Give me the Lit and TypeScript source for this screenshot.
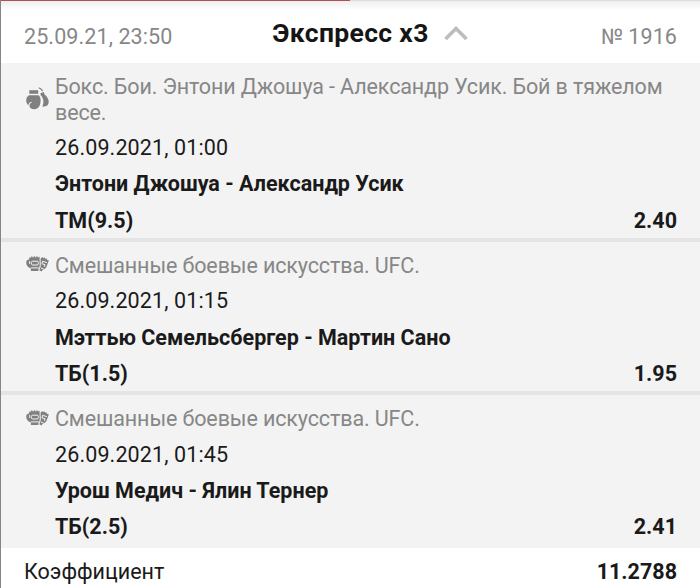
import { LitElement, html, css, svg } from 'lit';
import { customElement, property } from 'lit/decorators.js';

type Sport = 'boxing' | 'mma';

interface BetEvent {
  sport: Sport;
  league: string;
  date: string;
  teams: string;
  outcome: string;
  odds: string;
}

const EVENTS: BetEvent[] = [
  {
    sport: 'boxing',
    league: 'Бокс. Бои. Энтони Джошуа - Александр Усик. Бой в тяжелом весе.',
    date: '26.09.2021, 01:00',
    teams: 'Энтони Джошуа - Александр Усик',
    outcome: 'ТМ(9.5)',
    odds: '2.40',
  },
  {
    sport: 'mma',
    league: 'Смешанные боевые искусства. UFC.',
    date: '26.09.2021, 01:15',
    teams: 'Мэттью Семельсбергер - Мартин Сано',
    outcome: 'ТБ(1.5)',
    odds: '1.95',
  },
  {
    sport: 'mma',
    league: 'Смешанные боевые искусства. UFC.',
    date: '26.09.2021, 01:45',
    teams: 'Урош Медич - Ялин Тернер',
    outcome: 'ТБ(2.5)',
    odds: '2.41',
  },
];

const ICONS = {
  // pair of boxing gloves with a lace on top
  boxing: svg`
    <path d="M3.300 3.200h8.900v3.600H3.300z"></path>
    <path d="M3 8.300h9.500c1.300 1 2.100 2.600 2.100 4.900 0 5.300-2.200 9-6.300 9-3 0-4.800-1.400-4.800-3.300 0-1.700.9-2.600 2.400-3.300l-.5-.8c-1.700.7-2.800 1.800-3 3.400C1 17.400.2 15.900.2 13.600.2 11.100 1.300 9.300 3 8.300z"></path>
    <path d="M14.300 6.200l3.500-1.100.7 2.400c2.700 2 4.200 4.700 4.200 7.300 0 3.300-2.200 5-6.400 4.900 2-4.500 1.200-8.900-1.400-11.300z"></path>
    <path class="lace" d="M12.800 1.300c2-1 2.200 1.600 3.900 2.600"></path>
  `,
  // two open-finger grappling gloves
  mma: svg`
    <path d="M3.200 3.600V1.400h2.100V.3h1v1h1.500V.3h1.100v1h1.500V.3h1.100v1h1.300V.8h.8v5.400c.5 2.600.1 5.200-1.200 7.100v1.800H4.900v-2.600C1.800 11.600.2 9.100.2 6.800.2 4.700 1.300 3.700 3.200 3.600z"></path>
    <path d="M14.600 2.400l1.800-1.500.7 1.100 1.700-.5.5 1.200 1.500-.1.400 1.300 1.700.4-1.800 5c-.8 2.800-2.700 4.400-4.800 4.900l-.7 1.400-2.300-1.400c1.400-2.600 1.800-5.400 1.300-8.200z"></path>
    <path class="seam" d="M3.700 5v3M4.800 11.900h8"></path>
    <rect class="seam" x="5.500" y="5.200" width="6.800" height="3.800" rx="1.200"></rect>
    <path class="seam" d="M20.800 6.600l-4.300-1.300-.5 2.500 3 .9-.5 2.200M15 12l3 1.300"></path>
  `,
};

@customElement('bet-event')
export class BetEventRow extends LitElement {
  @property({ attribute: false }) event!: BetEvent;

  static styles = css`
    :host {
      display: block;
      padding: 11px 23px 0 25px;
      background: #f3f3f3;
    }

    .league {
      display: flex;
      align-items: center;
      color: #878787;
      line-height: 25.500px;
      letter-spacing: -0.120px;
    }

    .icon {
      flex: none;
      width: 23px;
      margin-right: 6px;
      fill: #808080;
    }

    .boxing {
      height: 23px;
      margin-bottom: 3px;
    }

    .mma {
      height: 16px;
      margin-bottom: 3px;
    }

    .lace {
      fill: none;
      stroke: #808080;
      stroke-width: 1.2;
    }

    .seam {
      fill: none;
      stroke: #f3f3f3;
      stroke-width: 1;
    }

    .line {
      display: flex;
      justify-content: space-between;
      margin-left: 29px;
      line-height: 36.300px;
    }

    .date {
      margin-top: 5px;
      letter-spacing: 0.120px;
    }

    .strong {
      font-weight: 700;
    }

    .pick {
      margin-bottom: -1px;
    }
  `;

  render() {
    const { sport, league, date, teams, outcome, odds } = this.event;
    return html`
      <div class="league">
        <svg class="icon ${sport}" viewBox=${sport === 'boxing' ? '0 0 23 23' : '0 0 23 16'}>
          ${ICONS[sport]}
        </svg>
        <span>${league}</span>
      </div>
      <div class="line date">${date}</div>
      <div class="line strong">${teams}</div>
      <div class="line strong pick">
        <span>${outcome}</span>
        <span>${odds}</span>
      </div>
    `;
  }
}

@customElement('app-root')
export class AppRoot extends LitElement {
  static styles = css`
    :host {
      display: block;
      box-sizing: border-box;
      height: 588px;
      overflow: hidden;
      border-left: 1px solid #858585;
      background: #fff;
      color: #1a1a1a;
      font: 400 21.500px Roboto, sans-serif;
      letter-spacing: 0.010px;
    }

    .progress {
      height: 1px;
      background: linear-gradient(90deg, #b34f54 349px, #dcdedd 349px);
    }

    .header {
      display: grid;
      grid-template-columns: 1fr auto 1fr;
      align-items: center;
      box-sizing: border-box;
      height: 62px;
      padding: 9px 23px 0;
      background: linear-gradient(#eee, #fff 9px);
      color: #878787;
      letter-spacing: 0.100px;
    }

    /* left padding balances the chevron, so the text itself is centred */
    .title {
      display: flex;
      align-items: center;
      gap: 15px;
      padding: 0 0 8px 39px;
      color: #151515;
      font-size: 26.500px;
      font-weight: 700;
      letter-spacing: 0.320px;
    }

    .chevron {
      width: 24px;
      height: 16px;
      fill: none;
      stroke: #bdbdbd;
      stroke-width: 3.6;
    }

    .number {
      text-align: right;
    }

    .events {
      display: grid;
      gap: 4px;
      padding-bottom: 3px;
      background: linear-gradient(#e4e4e4 90%, #f3f3f3 90%);
    }

    .total {
      display: flex;
      justify-content: space-between;
      padding: 0 23px;
      line-height: 47px;
    }

    .sum {
      font-weight: 700;
    }
  `;

  render() {
    return html`
      <div class="progress"></div>
      <div class="header">
        <span>25.09.21, 23:50</span>
        <span class="title">
          Экспресс x3
          <svg class="chevron" viewBox="0 0 24 16">
            <path d="M1.500 14L12 3.500 22.500 14"></path>
          </svg>
        </span>
        <span class="number">№ 1916</span>
      </div>
      <div class="events">
        ${EVENTS.map((event) => html`<bet-event .event=${event}></bet-event>`)}
      </div>
      <div class="total">
        <span>Коэффициент</span>
        <span class="sum">11.2788</span>
      </div>
    `;
  }
}
